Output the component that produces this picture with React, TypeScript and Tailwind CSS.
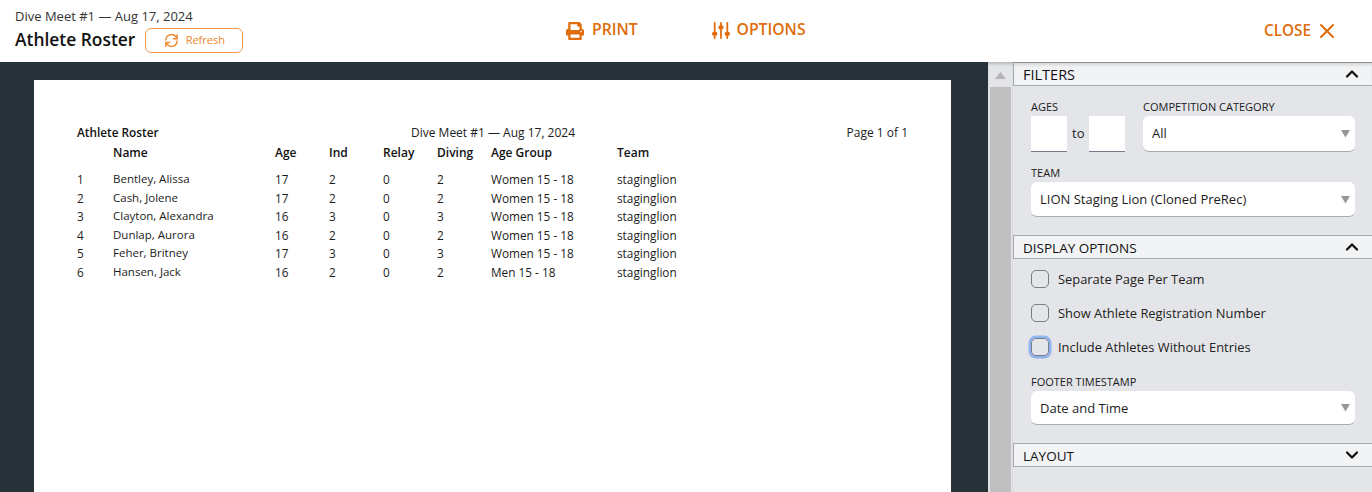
import { ChevronUp, ChevronDown, X } from "lucide-react";
import { FaPrint } from "react-icons/fa";

const rows = [
  ["1", "Bentley, Alissa", "17", "2", "0", "2", "Women 15 - 18", "h-[19px]"],
  ["2", "Cash, Jolene", "17", "2", "0", "2", "Women 15 - 18", "h-[18px]"],
  ["3", "Clayton, Alexandra", "16", "3", "0", "3", "Women 15 - 18", "h-[19px]"],
  ["4", "Dunlap, Aurora", "16", "2", "0", "2", "Women 15 - 18", "h-[18px]"],
  ["5", "Feher, Britney", "17", "3", "0", "3", "Women 15 - 18", "h-[19px]"],
  ["6", "Hansen, Jack", "16", "2", "0", "2", "Men 15 - 18", "h-[18px]"],
];

function Sliders() {
  return (
    <svg width="18" height="17" viewBox="0 0 18 17" fill="#e06c0c">
      <rect x="1.8" y="0" width="1.8" height="17" rx="0.9" />
      <rect x="0.2" y="10" width="5" height="3.6" rx="1.2" />
      <rect x="8.1" y="0" width="1.8" height="17" rx="0.9" />
      <rect x="6.5" y="3.6" width="5" height="3.6" rx="1.2" />
      <rect x="14.4" y="0" width="1.8" height="17" rx="0.9" />
      <rect x="12.8" y="10" width="5" height="3.6" rx="1.2" />
    </svg>
  );
}

function Refresh() {
  return (
    <svg width="15" height="15" viewBox="0 0 24 24" fill="none" stroke="#ec8a2e" strokeWidth="2.4" strokeLinecap="round" strokeLinejoin="round">
      <path d="M3 11a9 9 0 0 1 16-5l2 2.5" />
      <path d="M21 3v6h-6" />
      <path d="M21 13a9 9 0 0 1-16 5l-2-2.5" />
      <path d="M3 21v-6h6" />
    </svg>
  );
}

function Select({ value, h, pad = "pt-[1px]" }: { value: string; h: string; pad?: string }) {
  return (
    <div className={`${h} bg-white rounded-[6px] border-b border-b-[#a9abb0] flex items-center justify-between pl-[9px] pr-[4px] text-[13px] text-[#1c1c1c]`}>
      <span className={pad}>{value}</span>
      <svg width="9" height="9" viewBox="0 0 9 9" className="mr-[1px]"><path d="M0 1h9L4.5 8.5z" fill="#969696" /></svg>
    </div>
  );
}

function Section({ title, open = true, first, size = "text-[13.5px]" }: { title: string; open?: boolean; first?: boolean; size?: string }) {
  return (
    <div className={`h-[24px] bg-[#f2f3f5] border border-[#a6a8b2] border-r-0 flex items-center justify-between pl-[9px] pr-[10px] ${size} font-medium text-[#111] ${first ? "border-t-[#8d8f99] shadow-[inset_0_3px_3px_-1px_rgba(0,0,0,0.12)]" : ""}`}>
      <span className={first ? "pt-[1px]" : "pt-[2px]"}>{title}</span>
      {open ? <ChevronUp size={20} strokeWidth={2.7} color="#111" /> : <ChevronDown size={20} strokeWidth={2.7} color="#111" />}
    </div>
  );
}

function Check({ label, focus }: { label: string; focus?: boolean }) {
  return (
    <div className="flex items-center h-[20px] text-[12.9px] text-[#222]">
      <div className={`w-[18px] h-[18px] rounded-[5px] border-[1.5px] border-[#777b88] ${focus ? "shadow-[0_0_0_2.5px_#8fb3ee]" : ""}`} />
      <span className="ml-[9px] pt-[1px]">{label}</span>
    </div>
  );
}

const Label = ({ children }: { children: string }) => (
  <div className="text-[11px] leading-[14px] text-[#1a1a1a]">{children}</div>
);

export default function App() {
  return (
    <div className="w-[1372px] h-[492px] overflow-hidden flex flex-col bg-white" style={{ fontFamily: '"Open Sans", "Noto Sans", sans-serif' }}>
      <header className="h-[62px] shrink-0 flex items-start bg-white">
        <div className="w-[566px] pl-[15px] pt-[8px] shrink-0">
          <div className="text-[13px] leading-[17px] text-[#333]">Dive Meet #1 — Aug 17, 2024</div>
          <div className="flex items-start mt-[3px]">
            <span className="text-[17.4px] leading-[22px] font-semibold text-[#111]">Athlete Roster</span>
            <button className="ml-[10px] w-[98px] h-[25px] border border-[#ee9a4d] rounded-[6px] flex items-center justify-center gap-[7px] text-[11px] text-[#e9862b]">
              <Refresh />
              Refresh
            </button>
          </div>
        </div>
        <div className="flex items-center h-[60px] text-[#e06c0c] text-[15.7px] font-semibold">
          <FaPrint size={18} color="#e06c0c" className="mt-[2px]" />
          <span className="ml-[8px]">PRINT</span>
        </div>
        <div className="flex items-center h-[60px] ml-[74px] text-[#e06c0c] text-[15.7px] font-semibold">
          <Sliders />
          <span className="ml-[7px]">OPTIONS</span>
        </div>
        <div className="flex items-center h-[60px] ml-auto pr-[33px] text-[#e06c0c] text-[15.3px] font-semibold">
          <span>CLOSE</span>
          <X size={24} strokeWidth={2} className="ml-[4px] mt-[2px]" />
        </div>
      </header>
      <div className="flex-1 flex min-h-0">
        <main className="w-[988px] shrink-0 bg-[#263238] pl-[34px] pt-[18px] overflow-hidden">
          <div className="w-[917px] h-[500px] bg-white pl-[43px] pr-[43px] pt-[44px] text-[11.8px] text-[#1c1c1c]">
            <div className="flex h-[18px] items-center">
              <span className="w-[334px] font-semibold text-[#111]">Athlete Roster</span>
              <span className="text-[12px]">Dive Meet #1 — Aug 17, 2024</span>
              <span className="ml-auto text-[12px]">Page 1 of 1</span>
            </div>
            <table className="border-collapse table-fixed w-[660px]">
              <thead>
                <tr className="h-[20px] text-[12px] text-[#111] text-left">
                  <th className="w-[36px] font-semibold"></th>
                  <th className="w-[162px] font-semibold pt-[2px]">Name</th>
                  <th className="w-[54px] font-semibold pt-[2px]">Age</th>
                  <th className="w-[54px] font-semibold pt-[2px]">Ind</th>
                  <th className="w-[54px] font-semibold pt-[2px]">Relay</th>
                  <th className="w-[54px] font-semibold pt-[2px]">Diving</th>
                  <th className="w-[126px] font-semibold pt-[2px]">Age Group</th>
                  <th className="font-semibold pt-[2px]">Team</th>
                </tr>
                <tr className="h-[8px]"><th colSpan={8}></th></tr>
              </thead>
              <tbody>
                {rows.map((r) => (
                  <tr key={r[0]} className={r[7]}>
                    <td className="p-0 align-top leading-[18px]">{r[0]}</td>
                    <td className="p-0 align-top leading-[18px] text-[11.5px]">{r[1]}</td>
                    <td className="p-0 align-top leading-[18px]">{r[2]}</td>
                    <td className="p-0 align-top leading-[18px]">{r[3]}</td>
                    <td className="p-0 align-top leading-[18px]">{r[4]}</td>
                    <td className="p-0 align-top leading-[18px]">{r[5]}</td>
                    <td className="p-0 align-top leading-[18px]">{r[6]}</td>
                    <td className="p-0 align-top leading-[18px]">staginglion</td>
                  </tr>
                ))}
              </tbody>
            </table>
          </div>
        </main>
        <div className="w-[25px] shrink-0 flex flex-col bg-[#e4e5e9] pl-[2px] pr-[2px] shadow-[inset_0_3px_3px_-1px_rgba(0,0,0,0.2)]">
          <div className="h-[25px] flex items-center justify-center pt-[1px]">
            <svg width="11" height="7" viewBox="0 0 11 7"><path d="M5.5 0L11 7H0z" fill="#b4b4b4" /></svg>
          </div>
          <div className="flex-1 bg-[#c0c0c0]" />
        </div>
        <aside className="flex-1 bg-[#e4e5e9] overflow-hidden">
          <Section title="FILTERS" first size="text-[14.5px]" />
          <div className="pl-[18px] pr-[17px] pt-[14px] pb-[18px]">
            <div className="flex">
              <div className="w-[112px] shrink-0">
                <Label>AGES</Label>
                <div className="flex items-center mt-[2px]">
                  <div className="w-[36px] h-[36px] bg-white border-b border-b-[#777b88]" />
                  <span className="mx-[5px] text-[13px] text-[#222]">to</span>
                  <div className="w-[36px] h-[36px] bg-white border-b border-b-[#777b88]" />
                </div>
              </div>
              <div className="flex-1">
                <Label>COMPETITION CATEGORY</Label>
                <div className="mt-[2px]"><Select value="All" h="h-[36px]" /></div>
              </div>
            </div>
            <div className="mt-[14px]">
              <Label>TEAM</Label>
              <div className="mt-[2px]"><Select value="LION Staging Lion (Cloned PreRec)" h="h-[35px]" /></div>
            </div>
          </div>
          <Section title="DISPLAY OPTIONS" />
          <div className="pl-[18px] pr-[17px] pt-[10px]">
            <div className="flex flex-col gap-[14px]">
              <Check label="Separate Page Per Team" />
              <Check label="Show Athlete Registration Number" />
              <Check label="Include Athletes Without Entries" focus />
            </div>
            <div className="mt-[18px]">
              <Label>FOOTER TIMESTAMP</Label>
              <div className="mt-[2px]"><Select value="Date and Time" h="h-[34px]" pad="pt-[2px]" /></div>
            </div>
          </div>
          <div className="mt-[18px]"><Section title="LAYOUT" open={false} /></div>
        </aside>
      </div>
    </div>
  );
}
